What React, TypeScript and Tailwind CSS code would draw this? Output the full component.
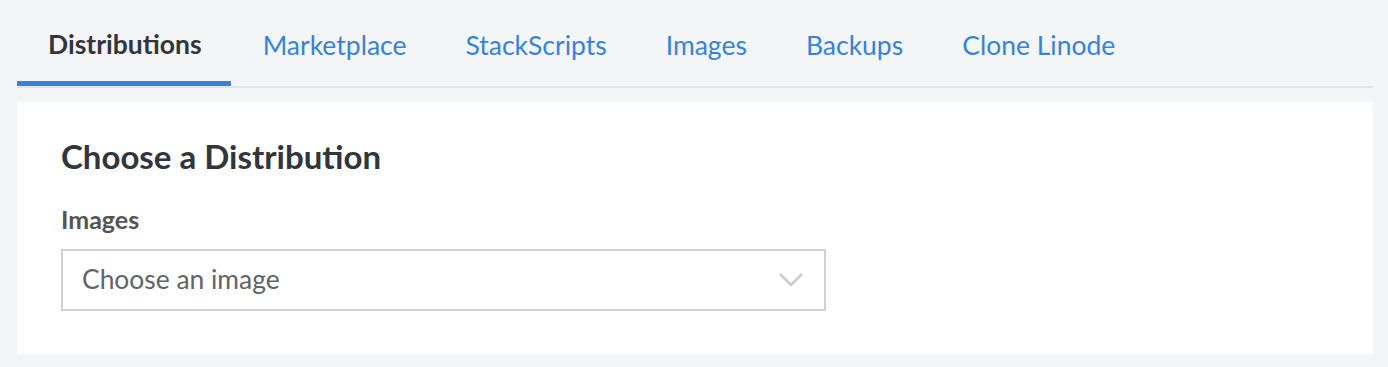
const tabs = ["Distributions", "Marketplace", "StackScripts", "Images", "Backups", "Clone Linode"];

export default function App() {
  return (
    <div className="min-h-[367px] w-full bg-[#f4f5f6] pl-[17px] pr-[15px] pb-[14px] font-['Lato',sans-serif]">
      <div className="flex border-b-2 border-[#e3e5e8]">
        {tabs.map((t, i) => (
          <div
            key={t}
            className={
              i === 0
                ? "mr-[2.5px] border-b-[5px] border-[#3683dc] pl-[31px] pr-[29px] pt-[31px] pb-[23px] text-[26.5px] font-bold leading-none text-[#32363c]"
                : "border-b-[5px] border-transparent px-[29.5px] pt-[32px] pb-[22px] text-[26.5px] leading-none text-[#3683dc]"
            }
          >
            {t}
          </div>
        ))}
      </div>
      <div className="mt-[14px] bg-white px-[44px] pt-[38px] pb-[43px]">
        <h2 className="text-[33px] font-bold leading-none text-[#32363c]">Choose a Distribution</h2>
        <div className="mt-[34px] text-[25px] font-bold leading-none text-[#555]">Images</div>
        <div className="mt-[17px] flex h-[62px] w-[765px] items-center justify-between border-2 border-[#cfd1d4] pl-[19px] pr-[20px]">
          <span className="text-[26.4px] leading-none text-[#606469]">Choose an image</span>
          <svg width="26" height="17" viewBox="0 0 26 17" fill="none">
            <polyline points="2,3 13,14 24,3" stroke="#cacbcc" strokeWidth="2.6" />
          </svg>
        </div>
      </div>
    </div>
  );
}
